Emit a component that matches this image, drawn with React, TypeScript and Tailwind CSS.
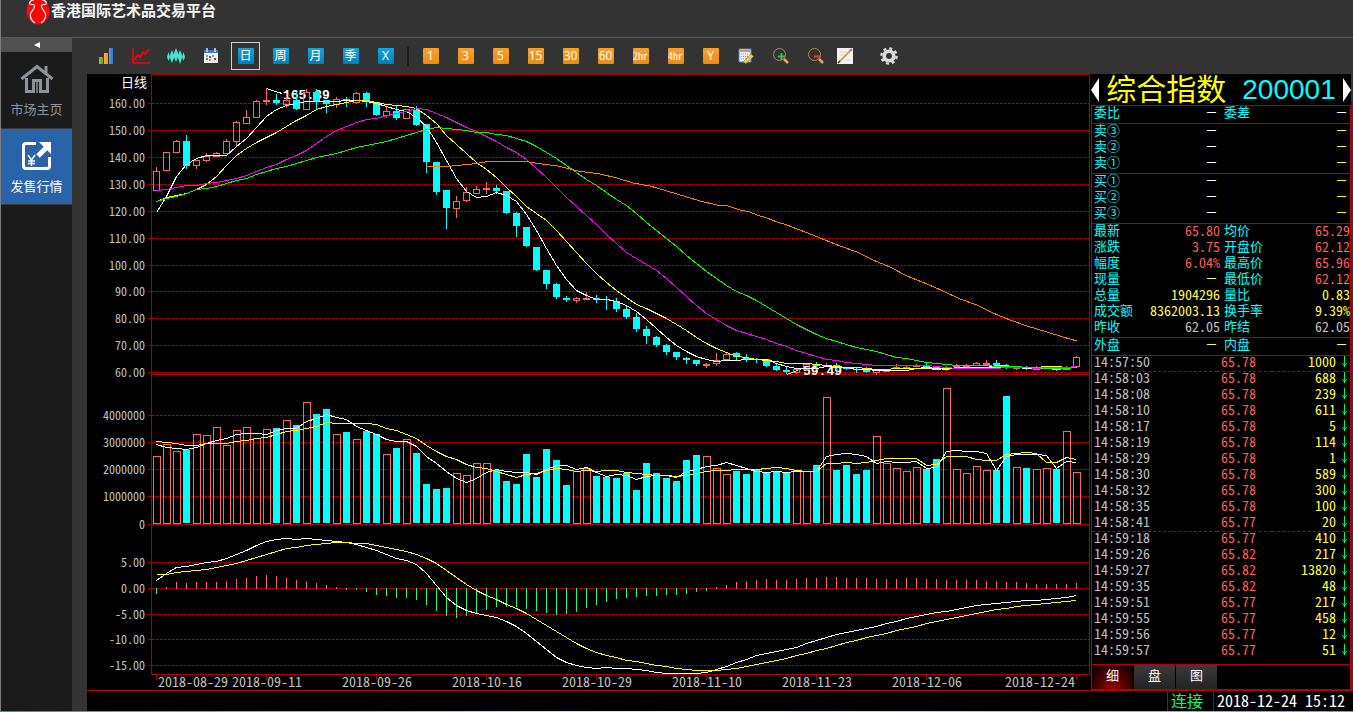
import { useState } from "react";
import type { ReactNode } from "react";

type Candle = [dir: "u" | "d", high: number, top: number, bottom: number, low: number];

// chart space: x grows 10 per day from 156, y is down the canvas
const CANDLES: Candle[] = [
  ["u", 167, 171, 191, 191], ["u", 152, 152, 171, 171], ["u", 140, 141, 153, 153], ["d", 135, 141, 166, 169],
  ["u", 160, 160, 166, 169], ["u", 153, 156, 161, 162], ["u", 152, 153, 157, 157], ["u", 139, 141, 154, 154],
  ["u", 121, 122, 142, 147], ["u", 110, 117, 124, 124], ["u", 100, 101, 118, 118], ["u", 88, 100, 102, 105],
  ["d", 94, 100, 103, 105], ["u", 94, 100, 105, 108], ["d", 92, 100, 109, 110], ["u", 89, 92, 110, 110],
  ["d", 89, 92, 102, 109], ["d", 100, 100, 104, 113], ["u", 97, 99, 105, 108], ["d", 97, 99, 101, 107],
  ["u", 92, 93, 103, 104], ["d", 92, 93, 101, 107], ["d", 102, 102, 115, 116], ["u", 107, 111, 116, 118],
  ["d", 106, 111, 118, 120], ["u", 109, 109, 119, 119], ["d", 106, 110, 125, 126], ["d", 124, 124, 162, 173],
  ["d", 162, 162, 192, 195], ["d", 190, 190, 208, 229], ["u", 196, 201, 209, 218], ["u", 187, 192, 201, 202],
  ["u", 186, 189, 194, 194], ["u", 182, 188, 190, 194], ["d", 185, 188, 191, 194], ["d", 191, 191, 213, 214],
  ["d", 212, 213, 226, 237], ["d", 227, 227, 246, 247], ["d", 247, 247, 270, 271], ["d", 270, 270, 284, 289],
  ["d", 283, 284, 297, 299], ["d", 296, 298, 300, 302], ["u", 297, 298, 301, 303], ["u", 292, 298, 300, 300],
  ["d", 295, 298, 300, 303], ["d", 296, 299, 300, 310], ["d", 298, 301, 309, 312], ["d", 305, 309, 317, 319],
  ["d", 313, 317, 329, 332], ["d", 326, 329, 336, 344], ["d", 336, 337, 345, 347], ["d", 344, 345, 352, 355],
  ["d", 352, 352, 357, 360], ["d", 357, 358, 360, 364], ["d", 360, 360, 364, 366], ["u", 363, 364, 366, 368],
  ["u", 353, 360, 364, 366], ["u", 352, 354, 360, 360], ["d", 352, 353, 357, 360], ["d", 354, 358, 359, 362],
  ["d", 358, 359, 360, 363], ["d", 359, 359, 366, 367], ["d", 364, 366, 370, 371], ["d", 367, 370, 372, 374],
  ["u", 368, 369, 373, 374], ["u", 364, 364, 370, 370], ["d", 362, 365, 366, 370], ["u", 363, 365, 367, 367],
  ["d", 363, 365, 367, 371], ["d", 367, 367, 369, 370], ["d", 368, 369, 370, 373], ["d", 367, 370, 372, 373],
  ["u", 370, 370, 373, 375], ["u", 370, 370, 372, 372], ["u", 364, 367, 369, 369], ["u", 365, 367, 368, 368],
  ["u", 364, 365, 367, 367], ["d", 363, 365, 367, 367], ["d", 367, 367, 369, 369], ["u", 366, 369, 370, 371],
  ["u", 364, 366, 367, 368], ["u", 364, 366, 367, 368], ["u", 362, 363, 366, 366], ["u", 360, 363, 365, 365],
  ["d", 360, 363, 365, 365], ["d", 364, 366, 367, 369], ["u", 366, 367, 369, 370], ["d", 366, 367, 368, 370],
  ["u", 366, 367, 370, 370], ["u", 367, 367, 368, 368], ["d", 367, 368, 369, 371], ["u", 366, 368, 370, 370],
  ["u", 356, 357, 367, 367],
];

const VOLUME = [
  456, 444, 451, 450, 434, 435, 427, 445, 430, 427, 438, 429, 428, 420, 425, 402, 414, 409, 434, 432, 439, 431, 434, 454,
  448, 439, 453, 484, 489, 488, 473, 475, 463, 463, 470, 481, 484, 454, 477, 449, 460, 485, 471, 468, 476, 477, 478, 473,
  490, 463, 473, 478, 481, 460, 455, 456, 468, 474, 471, 474, 470, 472, 472, 472, 470, 471, 465, 397, 470, 465, 474, 470,
  436, 463, 468, 471, 467, 469, 459, 388, 469, 473, 466, 470, 470, 396, 467, 468, 469, 468, 469, 431, 472,
];

const HISTOGRAM = [
  594, 587, 582, 583, 582, 582, 582, 581, 579, 578, 576, 575, 576, 578, 580, 581, 583, 585, 587, 590, 590, 592, 595, 596,
  598, 598, 600, 605, 611, 616, 618, 616, 614, 610, 607, 607, 607, 609, 611, 613, 615, 614, 612, 608, 605, 602, 599, 598,
  597, 596, 596, 595, 595, 594, 592, 591, 587, 585, 582, 581, 580, 579, 580, 580, 579, 578, 578, 577, 577, 578, 578, 578,
  579, 579, 579, 578, 578, 579, 579, 580, 580, 580, 580, 581, 581, 582, 582, 583, 584, 584, 584, 584, 583,
];

const MA5 = [
  212, 196, 176, 164, 158, 155, 155, 155, 146, 138, 127, 116, 109, 105, 103, 101, 101, 101, 101, 100, 100, 101, 103, 106,
  109, 111, 117, 126, 142, 160, 178, 191, 197, 196, 192, 195, 201, 214, 230, 248, 265, 279, 290, 295, 299, 299, 301, 305,
  311, 319, 328, 337, 345, 351, 356, 359, 361, 360, 360, 359, 359, 359, 363, 366, 368, 368, 368, 366, 367, 367, 369, 369,
  370, 370, 370, 370, 368, 367, 368, 369, 367, 367, 367, 367, 365, 365, 367, 368, 368, 368, 369, 368, 366,
];
const MA10 = [
  201, 197, 195, 193, 189, 184, 176, 165, 155, 148, 142, 137, 132, 126, 120, 115, 109, 106, 104, 102, 100, 100, 102, 104,
  105, 106, 108, 115, 123, 135, 144, 153, 162, 169, 177, 187, 196, 206, 213, 220, 230, 241, 252, 263, 273, 282, 290, 297,
  304, 308, 313, 318, 324, 330, 337, 343, 348, 352, 356, 357, 359, 360, 361, 363, 363, 363, 364, 365, 366, 367, 367, 368,
  369, 369, 368, 368, 368, 368, 369, 368, 368, 368, 368, 367, 367, 367, 367, 367, 367, 366, 366, 367, 367,
];
const MA20 = [
  190, 189, 187, 185, 185, 183, 182, 180, 178, 175, 171, 167, 164, 159, 155, 150, 143, 136, 130, 126, 122, 119, 118, 115,
  113, 111, 108, 109, 113, 117, 122, 127, 131, 136, 141, 147, 152, 159, 168, 177, 187, 197, 206, 215, 224, 234, 243, 252,
  258, 264, 270, 278, 287, 296, 305, 313, 319, 325, 330, 333, 336, 339, 343, 346, 350, 353, 356, 359, 360, 362, 363, 364,
  365, 365, 365, 365, 365, 365, 366, 367, 368, 368, 368, 368, 368, 367, 367, 367, 368, 367, 367, 367, 366,
];
const MA30 = [
  201, 198, 196, 193, 189, 188, 186, 183, 180, 178, 174, 171, 168, 166, 163, 160, 157, 155, 153, 150, 147, 145, 143, 141,
  138, 135, 132, 129, 127, 128, 129, 130, 132, 132, 134, 135, 138, 141, 146, 152, 158, 165, 172, 179, 185, 192, 199, 205,
  213, 222, 230, 238, 246, 255, 263, 271, 278, 285, 291, 295, 300, 306, 312, 318, 324, 329, 334, 338, 341, 344, 347, 349,
  351, 354, 357, 358, 360, 362, 363, 364, 365, 365, 365, 365, 366, 366, 366, 367, 367, 368, 368, 368, 367,
];
const MA60 =
  "426,167 452,166 462,165 472,164 492,161 522,161 542,164 558,166 578,171 600,174 617,178 633,183 650,186 667,191 687,197 700,201 717,205 728,206 740,210 750,212 757,215 767,218 777,222 787,225 797,229 808,233 820,238 840,246 857,252 873,260 890,267 907,276 927,284 943,291 960,299 977,305 993,313 1010,320 1027,326 1047,332 1063,337 1077,341";

const VOL_MA5 = [
  444, 447, 448, 449, 447, 443, 440, 438, 434, 433, 433, 434, 430, 428, 428, 421, 418, 414, 417, 419, 426, 430, 434, 439,
  441, 441, 446, 456, 463, 471, 478, 482, 478, 472, 469, 471, 472, 472, 474, 469, 465, 465, 469, 467, 472, 476, 474, 475,
  479, 476, 475, 475, 477, 471, 469, 466, 465, 462, 465, 468, 471, 472, 471, 472, 471, 471, 471, 456, 454, 453, 454, 456,
  463, 461, 462, 462, 461, 468, 467, 451, 450, 451, 451, 453, 470, 456, 454, 454, 454, 455, 468, 461, 462,
];
const VOL_MA10 = [
  441, 442, 443, 445, 445, 443, 443, 443, 441, 440, 438, 437, 434, 431, 430, 428, 426, 422, 423, 423, 423, 423, 424, 428,
  430, 434, 438, 445, 451, 456, 459, 464, 467, 468, 471, 474, 477, 474, 473, 470, 468, 469, 471, 470, 471, 470, 470, 472,
  473, 474, 475, 475, 476, 475, 473, 471, 470, 470, 469, 469, 469, 468, 467, 468, 470, 471, 471, 463, 463, 462, 463, 462,
  460, 458, 458, 458, 458, 465, 464, 456, 456, 456, 459, 460, 460, 454, 453, 452, 453, 462, 462, 457, 459,
];
const DIF = [
  580, 573, 567, 566, 564, 562, 561, 558, 554, 550, 545, 541, 539, 538, 539, 538, 539, 540, 541, 542, 544, 547, 550, 554,
  558, 560, 564, 573, 585, 597, 605, 610, 613, 615, 617, 621, 626, 633, 641, 649, 657, 662, 665, 667, 668, 667, 668, 668,
  669, 670, 672, 673, 673, 673, 673, 672, 669, 666, 662, 659, 655, 653, 651, 649, 647, 643, 640, 637, 634, 632, 630, 628,
  626, 623, 621, 618, 616, 614, 612, 611, 609, 607, 605, 604, 603, 602, 601, 600, 600, 599, 598, 597, 595,
];
const DEA = [
  574, 574, 572, 571, 570, 569, 567, 565, 563, 560, 557, 554, 551, 548, 547, 545, 544, 543, 542, 542, 543, 543, 545, 547,
  549, 551, 554, 558, 563, 570, 577, 584, 590, 595, 599, 604, 608, 613, 619, 625, 631, 637, 643, 648, 652, 655, 657, 660,
  661, 663, 665, 666, 668, 669, 670, 670, 670, 669, 668, 666, 664, 662, 660, 658, 655, 653, 650, 648, 645, 642, 640, 637,
  635, 633, 630, 628, 626, 623, 621, 619, 617, 615, 613, 611, 609, 608, 606, 605, 604, 603, 602, 601, 600,
];

const GRID: [y: number, label: string][] = [
  [103, "160.00"], [130, "150.00"], [157, "140.00"], [184, "130.00"], [211, "120.00"], [238, "110.00"],
  [265, "100.00"], [291, "90.00"], [318, "80.00"], [345, "70.00"], [372, "60.00"],
  [415, "4000000"], [442, "3000000"], [469, "2000000"], [496, "1000000"], [524, "0"],
  [562, "5.00"], [588, "0.00"], [614, "-5.00"], [639, "-10.00"], [665, "-15.00"],
];

const DATES: [x: number, label: string][] = [
  [158, "2018-08-29"], [232, "2018-09-11"], [342, "2018-09-26"], [452, "2018-10-16"], [562, "2018-10-29"],
  [672, "2018-11-10"], [782, "2018-11-23"], [892, "2018-12-06"], [1005, "2018-12-24"],
];
const DATE_TICKS = [156, 266, 376, 486, 596, 706, 816, 926, 1076];

const toPoints = (ys: number[]) => ys.map((y, i) => `${156.5 + i * 10},${y + 0.5}`).join(" ");

function Line({ ys, className }: { ys: number[]; className: string }) {
  return <polyline points={toPoints(ys)} fill="none" className={className} />;
}

function Chart() {
  return (
    <svg
      viewBox="87 74 1004 616"
      role="img"
      aria-label="综合指数 日线"
      shapeRendering="crispEdges"
      className="block h-full w-full font-['Noto_Sans_Mono_CJK_SC','Liberation_Mono',monospace]"
    >
      {/* frame */}
      <path
        d="M151.5 674V74.5H1089.5V674.5M151 374.5H1089M148 524.5H1089M151 674.5H1090"
        fill="none"
        stroke="#a80000"
      />
      {GRID.map(([y, label]) => (
        <g key={label} shapeRendering="auto">
          <path d={`M148 ${y + 0.5}H152`} stroke="#a80000" />
          {label !== "0" && <path d={`M152 ${y + 0.5}H1089`} stroke="#a80000" strokeDasharray="3 1" />}
          <text x="145" y={y + 5} textAnchor="end" className="fill-[#c0c0c0] text-[12px]">
            {label}
          </text>
        </g>
      ))}
      {DATE_TICKS.map((x) => (
        <path key={x} d={`M${x + 0.5} 674V680`} stroke="#a80000" />
      ))}
      {DATES.map(([x, label]) => (
        <text key={label} x={x} y="687" className="fill-[#c0c0c0] text-[14px]">
          {label}
        </text>
      ))}
      <text x="121" y="87" className="fill-white font-['Liberation_Mono','Noto_Sans_CJK_SC',monospace] text-[13px]">
        日线
      </text>

      {/* high and low marks */}
      <path d="M266.5 88.5L282 93.5M787 374.5L802 368.5" stroke="#fff" />
      <text x="283" y="99" className="fill-white font-['Liberation_Mono',monospace] text-[13px] font-bold">
        165.89
      </text>
      <text x="803" y="375" className="fill-white font-['Liberation_Mono',monospace] text-[13px] font-bold">
        59.49
      </text>

      {CANDLES.map(([dir, high, top, bottom, low], i) => {
        const x = 153 + i * 10;
        const color = dir === "u" ? "#ff6464" : "#00ffff";
        return (
          <g key={i}>
            <path d={`M${x + 3.5} ${high}V${top}M${x + 3.5} ${bottom}V${low}`} stroke={color} />
            {dir === "u" && bottom - top > 2 ? (
              <rect x={x + 0.5} y={top + 0.5} width="6" height={bottom - top - 1} fill="none" stroke={color} />
            ) : (
              <rect x={x} y={top} width="7" height={bottom - top} fill={color} />
            )}
          </g>
        );
      })}
      <Line ys={MA5} className="stroke-white" />
      <Line ys={MA10} className="stroke-[#ffff00]" />
      <Line ys={MA20} className="stroke-[#ff00ff]" />
      <Line ys={MA30} className="stroke-[#00ff00]" />
      <polyline points={MA60} fill="none" className="stroke-[#ff8000]" />

      {VOLUME.map((y, i) =>
        CANDLES[i][0] === "u" ? (
          <rect key={i} x={153.5 + i * 10} y={y + 0.5} width="7" height={523 - y} fill="none" stroke="#ff6464" />
        ) : (
          <rect key={i} x={153 + i * 10} y={y} width="7" height={523 - y} fill="#00ffff" />
        )
      )}
      <Line ys={VOL_MA5} className="stroke-white" />
      <Line ys={VOL_MA10} className="stroke-[#ffff00]" />

      {HISTOGRAM.map((y, i) => (
        <path key={i} d={`M${156.5 + i * 10} ${y < 589 ? 589 : 588}V${y}`} stroke={y < 589 ? "#ff6464" : "#20ff70"} />
      ))}
      <Line ys={DIF} className="stroke-white" />
      <Line ys={DEA} className="stroke-[#ffff00]" />
    </svg>
  );
}

function Logo() {
  return (
    <svg width="24" height="25" viewBox="0 0 24 25" aria-hidden="true">
      <ellipse cx="12" cy="11" rx="11.5" ry="13.5" fill="#f80808" />
      <g fill="none" stroke="#fff" strokeWidth="1.1">
        <path d="M8 0C5 0 3 2 4 4C5 5.500 8 3 8.500 6C9 9 5 11 4.500 14C4 18 6 21 9 23" />
        <path d="M16 0C19 0 21 2 20 4C19 5.500 16 3 15.500 6C15 9 19 11 19.500 14C20 18 18 21 15 23" />
      </g>
    </svg>
  );
}

function HomeIcon() {
  return (
    <svg width="34" height="30" viewBox="0 0 34 30" fill="none" stroke="#8d9399" strokeWidth="3" aria-hidden="true">
      <path d="M1.500 15L17 2.500L32.500 15" />
      <path d="M26 9V2" strokeWidth="3" />
      <path d="M6.500 14V27.500H13.500V16.500H20.500V27.500H27.500V14" />
      <path d="M17 18V29" strokeWidth="1.500" />
    </svg>
  );
}

function IssueIcon() {
  return (
    <svg width="30" height="30" viewBox="0 0 30 30" fill="none" stroke="#fff" aria-hidden="true">
      <path d="M14 2.500H4Q1.500 2.500 1.500 5V25Q1.500 27.500 4 27.500H25Q27.500 27.500 27.500 25V16" strokeWidth="3" />
      <path d="M16 15L24 7" strokeWidth="5" />
      <path d="M17 1H29V13Z" fill="#fff" stroke="none" />
      <path d="M6 14L9.500 19L13 14M9.500 19V25M6 20H13M6 22.500H13" strokeWidth="1.400" />
    </svg>
  );
}

function ToolButton({ label, active, onClick, children }: {
  label: string;
  active?: boolean;
  onClick?: () => void;
  children: ReactNode;
}) {
  return (
    <button
      type="button"
      aria-label={label}
      onClick={onClick}
      className={`flex h-7 w-[29px] shrink-0 items-center justify-center border ${active ? "border-[#d0d0d0]" : "border-transparent"}`}
    >
      {children}
    </button>
  );
}

const PERIODS = ["日", "周", "月", "季", "X"];
const MINUTES = ["1", "3", "5", "15", "30", "60", "2hr", "4hr", "Y"];

function Toolbar() {
  const [period, setPeriod] = useState("日");
  return (
    <div className="flex h-9 shrink-0 items-center gap-[6px] bg-[#333] pl-1">
      <ToolButton label="柱状图">
        <svg width="16" height="16" viewBox="0 0 16 16">
          <path d="M1 9H5V16H1Z" fill="#62b01e" />
          <path d="M6 5H10V16H6Z" fill="#f59a1c" />
          <path d="M11 0H15V16H11Z" fill="#2f7fe0" />
          <path d="M2 9V16M7 5V16M12 0V16" stroke="#fff" strokeOpacity="0.35" />
        </svg>
      </ToolButton>
      <ToolButton label="走势图">
        <svg width="20" height="18" viewBox="0 0 20 18" fill="none" stroke="#f00">
          <path d="M2 1V16H19" strokeWidth="1.500" />
          <path d="M3 13L7 8L9 10L12 5L14 7L18 2" strokeWidth="1.800" />
        </svg>
      </ToolButton>
      <ToolButton label="K线图">
        <svg width="18" height="16" viewBox="0 0 18 16" fill="#45e3cc">
          <path d="M1.500 4L3 9L1.500 13L0 9ZM5 2L7 7V10L5 15L3 10V7ZM9 0L11 5V9L9 14L7 9V5ZM13 2L15 7V10L13 16L11 10V7ZM16.500 4L18 9L16.500 13L15 9Z" />
        </svg>
      </ToolButton>
      <ToolButton label="日历">
        <svg width="16" height="16" viewBox="0 0 16 16">
          <path d="M1 2H15V15H1Z" fill="#f0f0f0" />
          <path d="M1 2H15V5H1Z" fill="#3d78c8" />
          <path d="M4 0V4M12 0V4" stroke="#ddd" strokeWidth="1.500" />
          <path d="M3 8H5M9 8H11M6 12H8" stroke="#999" strokeWidth="2" />
          <path d="M6 9H8M11 11H13" stroke="#d02a2a" strokeWidth="2" />
          <path d="M3 11H5" stroke="#3c9a3c" strokeWidth="2" />
        </svg>
      </ToolButton>
      {PERIODS.map((p) => (
        <ToolButton key={p} label={p} active={p === period} onClick={() => setPeriod(p)}>
          <span className="flex size-4 items-center justify-center rounded-[1px] bg-linear-to-b from-[#17a3dc] to-[#0080bc] font-['Open_Sans','Noto_Sans_CJK_SC',sans-serif] text-[12px] leading-4 text-white">
            {p}
          </span>
        </ToolButton>
      ))}
      <span className="mx-px h-[19px] w-[2px] bg-[#1c1c1c]" />
      {MINUTES.map((m) => (
        <ToolButton key={m} label={m} active={m === period} onClick={() => setPeriod(m)}>
          <span
            className={`flex size-4 items-center justify-center rounded-[1px] bg-linear-to-b from-[#f8a02c] to-[#ec8c14] leading-4 text-white ${
              m.length > 2 ? "font-['Noto_Sans_Mono_CJK_SC',monospace] text-[10px]" : "font-['Open_Sans',sans-serif] text-[12px]"
            }`}
          >
            {m}
          </span>
        </ToolButton>
      ))}
      <ToolButton label="编辑指标">
        <svg width="16" height="16" viewBox="0 0 16 16">
          <path d="M1 1H13V14H1Z" fill="#e8f0fa" stroke="#4a86d0" />
          <path d="M2 2H12V4H2Z" fill="#f09040" />
          <path d="M3 6H11M3 8.500H11M3 11H8" stroke="#6aa0dc" strokeDasharray="1 1" />
          <path d="M5 14L13 6L15.500 8.500L8 15.500Z" fill="#f0c84a" stroke="#a87a20" strokeWidth="0.600" />
        </svg>
      </ToolButton>
      <ToolButton label="放大">
        <svg width="18" height="18" viewBox="0 0 18 18" fill="none">
          <circle cx="7.500" cy="7.500" r="6" stroke="#b98a4a" />
          <path d="M12 12L16 16" stroke="#e0a868" strokeWidth="2.500" />
          <path d="M6 9.500H13M9.500 6V13" stroke="#45b845" strokeWidth="2" />
        </svg>
      </ToolButton>
      <div className="flex">
        <ToolButton label="缩小">
          <svg width="18" height="18" viewBox="0 0 18 18" fill="none">
            <circle cx="7.500" cy="7.500" r="6" stroke="#b98a4a" />
            <path d="M12 12L16 16" stroke="#e0a868" strokeWidth="2.500" />
            <path d="M7 9.500H14" stroke="#e04040" strokeWidth="2.200" />
          </svg>
        </ToolButton>
        <ToolButton label="画线">
          <svg width="16" height="16" viewBox="0 0 16 16">
            <path d="M0 0H16V16H0Z" fill="#f2f2f2" />
            <path d="M3 4H9M3 7H7M8 12H13" stroke="#d8d8d8" />
            <path d="M2 14L14 2" stroke="#e8a020" strokeWidth="1.800" />
            <path d="M13 3L15 1" stroke="#c060c0" strokeWidth="2" />
            <path d="M1 15L3 13" stroke="#333" strokeWidth="1.500" />
          </svg>
        </ToolButton>
      </div>
      <div className="pl-[9px]">
        <ToolButton label="设置">
          <svg width="18" height="18" viewBox="0 0 18 18" fill="none" stroke="#dcdcdc">
            <circle cx="9" cy="9" r="4.800" strokeWidth="3.600" />
            <circle cx="9" cy="9" r="7.600" strokeWidth="2.400" strokeDasharray="2.985 2.985" />
          </svg>
        </ToolButton>
      </div>
    </div>
  );
}

type Field = { name: string; value?: string; color?: string };

const DASH_WHITE = "text-white";
const DASH_YELLOW = "text-[#ffff00]";
const RED = "text-[#ff5c5c]";
const YELLOW = "text-[#ffff40]";
const GRAY = "text-[#c0c0c0]";

const RATIO: Field[] = [{ name: "委比", color: DASH_WHITE }, { name: "委差", color: DASH_WHITE }];
const depth = (names: string[]): Field[] =>
  names.flatMap((name) => [{ name, color: DASH_WHITE }, { name: "", color: DASH_YELLOW }]);
const SUMMARY: Field[] = [
  { name: "最新", value: "65.80", color: RED }, { name: "均价", value: "65.29", color: RED },
  { name: "涨跌", value: "3.75", color: RED }, { name: "开盘价", value: "62.12", color: RED },
  { name: "幅度", value: "6.04%", color: RED }, { name: "最高价", value: "65.96", color: RED },
  { name: "现量", color: YELLOW }, { name: "最低价", value: "62.12", color: RED },
  { name: "总量", value: "1904296", color: YELLOW }, { name: "量比", value: "0.83", color: YELLOW },
  { name: "成交额", value: "8362003.13", color: YELLOW }, { name: "换手率", value: "9.39%", color: YELLOW },
  { name: "昨收", value: "62.05", color: GRAY }, { name: "昨结", value: "62.05", color: GRAY },
];
const SIDES: Field[] = [{ name: "外盘", color: YELLOW }, { name: "内盘", color: YELLOW }];

const TRADES: [time: string, price: string, qty: number][] = [
  ["14:57:50", "65.78", 1000], ["14:58:03", "65.78", 688], ["14:58:08", "65.78", 239], ["14:58:10", "65.78", 611],
  ["14:58:17", "65.78", 5], ["14:58:19", "65.78", 114], ["14:58:29", "65.78", 1], ["14:58:30", "65.78", 589],
  ["14:58:32", "65.78", 300], ["14:58:35", "65.78", 100], ["14:58:41", "65.77", 20], ["14:59:18", "65.77", 410],
  ["14:59:26", "65.82", 217], ["14:59:27", "65.82", 13820], ["14:59:35", "65.82", 48], ["14:59:51", "65.77", 217],
  ["14:59:55", "65.77", 458], ["14:59:56", "65.77", 12], ["14:59:57", "65.77", 51],
];

function Fields({ items }: { items: Field[] }) {
  return (
    <dl className="grid grid-cols-2 gap-x-1 border-t border-[#b40000] pb-px pl-[2px]">
      {items.map(({ name, value, color }, i) => (
        <div key={i} className="flex h-4 items-start justify-between">
          <dt className="font-['Liberation_Mono','Noto_Sans_CJK_SC',monospace] text-[13px] leading-4 text-[#00ffff]">
            {name}
          </dt>
          <dd className={`text-[14px] leading-[13px] ${color}`}>
            {value ?? (
              <span className="block pr-1 font-['Liberation_Sans',sans-serif] text-[9px] leading-[13px] font-bold">—</span>
            )}
          </dd>
        </div>
      ))}
    </dl>
  );
}

function QuotePanel() {
  const [tab, setTab] = useState("细");
  return (
    <aside className="flex w-[260px] shrink-0 flex-col bg-black font-['Noto_Sans_Mono_CJK_SC','Liberation_Mono',monospace]">
      <div className="flex h-[31px] shrink-0 items-center justify-between">
        <button type="button" aria-label="上一个">
          <svg width="8" height="24" viewBox="0 0 8 24" fill="#fff"><path d="M8 0V24L0 12Z" /></svg>
        </button>
        <h2 className="flex items-center gap-4 leading-[31px]">
          <span className="font-['Liberation_Sans','Noto_Sans_CJK_SC',sans-serif] text-[30px] text-[#ffff00]">综合指数</span>
          <span className="font-['Liberation_Sans',sans-serif] text-[28px] text-[#00ffff]">200001</span>
        </h2>
        <button type="button" aria-label="下一个">
          <svg width="8" height="24" viewBox="0 0 8 24" fill="#fff"><path d="M0 0V24L8 12Z" /></svg>
        </button>
      </div>
      <div className="flex flex-1 flex-col border-x border-b border-[#b40000]">
        <Fields items={RATIO} />
        <Fields items={depth(["卖③", "卖②", "卖①"])} />
        <Fields items={depth(["买①", "买②", "买③"])} />
        <Fields items={SUMMARY} />
        <Fields items={SIDES} />
        <table className="w-full border-collapse border-t border-[#b40000] text-[14px] leading-[11px]">
          <tbody>
            {TRADES.map(([time, price, qty], i) => (
              <tr
                key={time}
                className={`h-4 align-top ${i === 1 || i === 11 ? "border-t border-dashed border-[#b40000]" : ""}`}
              >
                <td className={`pl-[2px] ${GRAY}`}>{time}</td>
                <td className={`w-[55px] pl-1 ${RED}`}>{price}</td>
                <td className={`w-[64px] text-right ${YELLOW}`}>{qty}</td>
                <td className="w-[14px] pl-[6px]">
                  <svg width="5" height="11" viewBox="0 0 5 11" fill="none" stroke="#00ff66" className="block">
                    <path d="M2.500 0V11M0 7L2.500 10L5 7" />
                  </svg>
                </td>
              </tr>
            ))}
          </tbody>
        </table>
        <div role="tablist" className="mt-auto flex h-[25px] gap-px border-t border-[#b40000] text-[13px] text-white">
          {["细", "盘", "图"].map((t) => (
            <button
              key={t}
              type="button"
              role="tab"
              aria-selected={t === tab}
              onClick={() => setTab(t)}
              className={`w-[41px] pb-1 leading-5 ${
                t === tab
                  ? "bg-[radial-gradient(ellipse_at_bottom,#9c0000,#1c0000_80%)]"
                  : "bg-linear-to-b from-[#3a3a3a] to-[#242424]"
              }`}
            >
              {t}
            </button>
          ))}
        </div>
      </div>
    </aside>
  );
}

export default function App() {
  return (
    <div className="flex h-screen min-h-[712px] flex-col border-l border-[#7c7c7c] bg-[#333]">
      <header className="flex h-[38px] shrink-0 items-start gap-px border-b border-[#5a5a5a] pl-[25px]">
        <Logo />
        <h1 className="font-['Noto_Sans_CJK_SC',sans-serif] text-[15px] leading-5 font-bold text-[#f4f4f4]">
          香港国际艺术品交易平台
        </h1>
      </header>

      <div className="flex min-h-0 flex-1">
        <nav className="flex w-[71px] shrink-0 flex-col bg-[#1b1b1b] font-['Noto_Sans_CJK_SC',sans-serif] text-[13px]">
          <button type="button" aria-label="收起" className="flex h-[14px] items-center justify-center bg-[#505050]">
            <svg width="6" height="6" viewBox="0 0 6 6" fill="#fff"><path d="M6 0V6L0 3Z" /></svg>
          </button>
          <a href="#market" className="flex h-[77px] flex-col items-center gap-2 border-b border-[#3a3a3a] pt-3 text-[#8d9399]">
            <HomeIcon />
            <span className="leading-[14px]">市场主页</span>
          </a>
          <a href="#issue" className="flex h-[76px] flex-col items-center gap-2 border-b border-[#3a3a3a] bg-[#2963a9] pt-3 text-white">
            <IssueIcon />
            <span className="leading-[14px]">发售行情</span>
          </a>
        </nav>

        <main className="flex min-w-0 flex-1 flex-col pl-[15px]">
          <Toolbar />
          <div className="flex min-h-0 flex-1 bg-black">
            <section className="min-w-0 flex-1">
              <Chart />
            </section>
            <QuotePanel />
            <div className="w-[2px] bg-[#333]" />
          </div>
          <footer className="flex h-[21px] shrink-0 justify-end border-t border-[#b40000] bg-black font-['Noto_Sans_Mono_CJK_SC','Liberation_Mono',monospace] text-[16px] leading-[19px]">
            <span className="border-l border-[#b40000] pr-[10px] pl-[3px] text-[#00ff66]">连接</span>
            <time className="border-l border-[#b40000] pr-2 pl-[3px] text-white">2018-12-24 15:12</time>
          </footer>
        </main>
      </div>
      <div className="h-px shrink-0 bg-linear-to-r from-[#4f87a8] via-[#dfe9f2] to-[#7d9cbc]" />
    </div>
  );
}
